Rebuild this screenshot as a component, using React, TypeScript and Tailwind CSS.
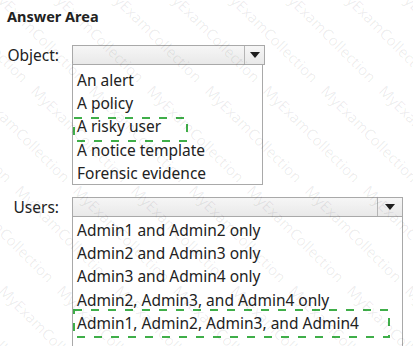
import React from "react";

function Arrow() {
  return (
    <svg width="10" height="6" viewBox="0 0 10 6">
      <path d="M0 0 H10 L5 6 Z" fill="#1f1f1f" />
    </svg>
  );
}

function Dashed({ w, h }: { w: number; h: number }) {
  return (
    <svg width={w} height={h} className="block">
      <rect
        x="1"
        y="1"
        width={w - 2}
        height={h - 2}
        fill="none"
        stroke="#3fae49"
        strokeWidth="2"
        strokeDasharray="8 9"
      />
    </svg>
  );
}

const objects = ["An alert", "A policy", "A risky user", "A notice template", "Forensic evidence"];
const users = [
  "Admin1 and Admin2 only",
  "Admin2 and Admin3 only",
  "Admin3 and Admin4 only",
  "Admin2, Admin3, and Admin4 only",
  "Admin1, Admin2, Admin3, and Admin4",
];

const marks: { x: number; y: number }[] = [];
for (let c = -8; c < 10; c++) {
  for (let r = 0; r < 6; r++) {
    marks.push({ x: c * 58 + r * 100, y: r * 100 - 20 });
  }
}

export default function App() {
  return (
    <div
      className="relative w-[413px] h-[346px] overflow-hidden bg-white text-[#222]"
      style={{ fontFamily: '"Noto Sans", "Open Sans", sans-serif' }}
    >
      <div className="pl-[7px] pt-[6px] text-[14.5px] font-bold leading-[20px] text-[#222]">Answer Area</div>

      {/* Object */}
      <div className="mt-[19px] flex">
        <div className="w-[60px] text-right text-[15.5px] leading-[20px] pr-[1px]">Object:</div>
        <div className="ml-[12px] flex flex-col">
          <div className="flex h-[20px] w-[193px] border border-[#a9a9a9] bg-gradient-to-b from-[#f6f6f6] to-[#e9e9e9]">
            <div className="flex-1" />
            <div className="flex w-[20px] items-center justify-center border-l border-[#b5b5b5]">
              <Arrow />
            </div>
          </div>
          <div className="relative w-[191px] h-[120px] border border-t-0 border-[#a9a9a9] bg-white pt-[4px]">
            {objects.map((o) => (
              <div key={o} className="pl-[4px] text-[15.5px] leading-[23.2px] whitespace-nowrap">
                {o}
              </div>
            ))}
            <div className="absolute left-[0px] top-[52px]">
              <Dashed w={115} h={25} />
            </div>
          </div>
        </div>
      </div>

      {/* Users */}
      <div className="mt-[12px] flex">
        <div className="w-[60px] text-right text-[15.5px] leading-[20px] pr-[1px]">Users:</div>
        <div className="ml-[12px] flex flex-col">
          <div className="flex h-[20px] w-[331px] border border-[#a9a9a9] bg-gradient-to-b from-[#f6f6f6] to-[#e9e9e9]">
            <div className="flex-1" />
            <div className="flex w-[25px] items-center justify-center border-l border-[#b5b5b5]">
              <Arrow />
            </div>
          </div>
          <div className="relative w-[331px] h-[140px] border border-t-0 border-[#a9a9a9] bg-white pt-[2px]">
            {users.map((o) => (
              <div key={o} className="pl-[4px] text-[15.5px] leading-[23.2px] whitespace-nowrap">
                {o}
              </div>
            ))}
            <div className="absolute left-[0px] top-[92px]">
              <Dashed w={317} h={29} />
            </div>
          </div>
        </div>
      </div>

      {/* watermark overlay */}
      <div className="pointer-events-none absolute inset-0">
        {marks.map((m, i) => (
          <span
            key={i}
            className="absolute origin-top-left rotate-45 whitespace-nowrap text-[15px] text-black/[0.07]"
            style={{ left: m.x, top: m.y }}
          >
            MyExamCollection
          </span>
        ))}
      </div>
    </div>
  );
}
